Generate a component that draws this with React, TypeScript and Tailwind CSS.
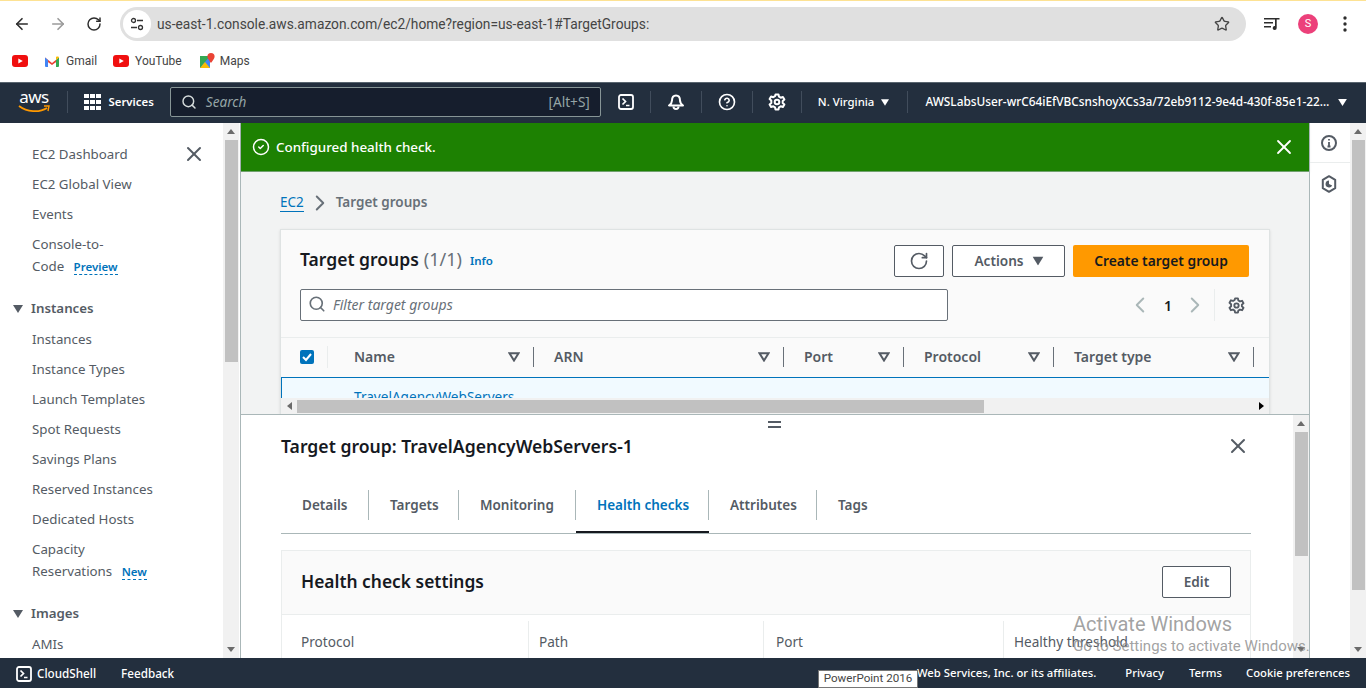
import React from 'react';
import {
  ArrowLeft,
  ArrowRight,
  RotateCw,
  Star,
  X,
  Search,
  ChevronRight,
  ChevronLeft,
  CircleCheck,
  CircleHelp,
} from 'lucide-react';

const ember = { fontFamily: '"Noto Sans", "Open Sans", sans-serif' };

const Caret = ({ className = '' }: { className?: string }) => (
  <svg width="10" height="8" viewBox="0 0 10 8" className={className}>
    <path d="M0 0h10L5 8z" fill="currentColor" />
  </svg>
);

const FilterCaret = () => (
  <svg width="12" height="10" viewBox="0 0 12 10" className="text-[#545b64]">
    <path d="M1.500 1.200h9L6 8.500z" fill="none" stroke="currentColor" strokeWidth="2" />
  </svg>
);

const Gear = ({ size = 18, className = '' }: { size?: number; className?: string }) => (
  <svg width={size} height={size} viewBox="0 0 18 18" fill="none" stroke="currentColor" strokeWidth="2" className={className}>
    <path d="M7.500 1.500h3l.5 2.200 1.700 1 2.200-.7 1.500 2.600-1.700 1.500v1.800l1.700 1.500-1.500 2.600-2.200-.7-1.700 1-.5 2.200h-3l-.5-2.200-1.700-1-2.200.7-1.500-2.600 1.700-1.500V7.600L1.600 6.100l1.500-2.600 2.200.7 1.700-1z" strokeLinejoin="round" />
    <circle cx="9" cy="9" r="2.300" />
  </svg>
);

const Terminal = ({ size = 16 }: { size?: number }) => (
  <svg width={size} height={size} viewBox="0 0 16 16" fill="none" stroke="currentColor">
    <rect x="1" y="1" width="14" height="14" rx="2" strokeWidth="1.800" />
    <path d="M4.500 4.500 7.500 7.500l-3 3M8 11.500h3.500" strokeWidth="1.700" />
  </svg>
);

const YouTubeIcon = () => (
  <svg width="16" height="12" viewBox="0 0 16 12">
    <rect width="16" height="12" rx="3" fill="#f00f0f" />
    <path d="M6.300 3.400v5.200L10.800 6z" fill="#fff" />
  </svg>
);

const ScrollArrow = ({ up }: { up?: boolean }) => (
  <svg width="8" height="5" viewBox="0 0 8 5" className="text-[#6b6b6b]">
    <path d={up ? 'M4 0l4 5H0z' : 'M0 0h8L4 5z'} fill="currentColor" />
  </svg>
);

const VScroll = ({ thumb }: { thumb: number }) => (
  <div className="w-4 shrink-0 bg-[#f1f1f1] flex flex-col items-center relative">
    <div className="h-[17px] flex items-center justify-center"><ScrollArrow up /></div>
    <div className="w-[13px] bg-[#c1c1c1]" style={{ height: thumb }} />
    <div className="absolute bottom-0 h-[17px] flex items-center justify-center"><ScrollArrow /></div>
  </div>
);

const NavSep = ({ className = '' }: { className?: string }) => <div className={`w-px h-[22px] bg-[#414d5c] shrink-0 ${className}`} />;

const SideItem = ({ children }: { children: React.ReactNode }) => (
  <div className="h-[30px] leading-[30px] pl-8 text-[13.300px] text-[#545b64] whitespace-nowrap">{children}</div>
);

const SideHead = ({ children }: { children: React.ReactNode }) => (
  <div className="h-[33px] pt-[2px] flex items-center pl-[13px] gap-[8px] text-[13.300px] font-semibold text-[#545b64]">
    <Caret className="text-[#545b64]" />
    {children}
  </div>
);

const Badge = ({ children }: { children: React.ReactNode }) => (
  <span className="ml-[6px] text-[11.500px] font-semibold text-[#0073bb] border-b border-dashed border-[#0073bb] leading-[15px] inline-block">{children}</span>
);

const columns = [
  { name: 'Name', w: 'w-[200px]' },
  { name: 'ARN', w: 'w-[250px]' },
  { name: 'Port', w: 'w-[120px]' },
  { name: 'Protocol', w: 'w-[150px]' },
  { name: 'Target type', w: 'w-[200px]' },
];

const tabs = [
  { name: 'Details', w: 'w-[88px]' },
  { name: 'Targets', w: 'w-[90px]' },
  { name: 'Monitoring', w: 'w-[117px]' },
  { name: 'Health checks', w: 'w-[133px]', active: true },
  { name: 'Attributes', w: 'w-[108px]' },
  { name: 'Tags', w: 'w-[90px]' },
];

const settings = [
  { name: 'Protocol', w: 'w-[247px] pl-[19px]' },
  { name: 'Path', w: 'w-[235px] pl-[10px]' },
  { name: 'Port', w: 'w-[240px] pl-3' },
  { name: 'Healthy threshold', w: 'flex-1 pl-[10px]' },
];

export default function App() {
  return (
    <div className="w-[1366px] h-[688px] overflow-hidden bg-white flex flex-col relative" style={ember}>
      {/* browser chrome */}
      <div className="h-[82px] shrink-0 bg-white border-t border-[#fde293] flex flex-col" style={{ fontFamily: 'Roboto, sans-serif' }}>
        <div className="h-[34px] mt-[6px] flex items-center">
          <ArrowLeft size={18} className="ml-[13px] text-[#2d2d2d]" strokeWidth={2.2} />
          <ArrowRight size={18} className="ml-[18px] text-[#9a9a9a]" strokeWidth={2.2} />
          <RotateCw size={16} className="ml-[19px] text-[#2d2d2d]" strokeWidth={2.2} />
          <div className="ml-[18px] w-[1126px] h-[34px] rounded-full bg-[#e0e0e0] flex items-center pl-[3px]">
            <div className="w-[28px] h-[28px] rounded-full bg-white flex items-center justify-center">
              <svg width="14" height="14" viewBox="0 0 14 14" fill="none" stroke="#333" strokeWidth="1.300">
                <circle cx="3.500" cy="3.500" r="2" />
                <path d="M7 3.500h6M1 10.500h6" />
                <circle cx="10.500" cy="10.500" r="2" />
              </svg>
            </div>
            <span className="ml-[6px] text-[13.750px] text-[#454545]">us-east-1.console.aws.amazon.com/ec2/home?region=us-east-1#TargetGroups:</span>
            <Star size={16} className="ml-auto mr-4 text-[#454545]" />
          </div>
          <svg width="16" height="14" viewBox="0 0 16 14" className="ml-[18px] text-[#2d2d2d]" fill="currentColor">
            <path d="M0 1h12v1.600H0zM0 5h9v1.600H0zM0 9h7v1.600H0zM11 1h4.500v1.600H12.700V11a2 2 0 1 1-1.700-2z" />
          </svg>
          <div className="ml-[18px] w-5 h-5 rounded-full bg-[#ec407a] text-white text-[11px] flex items-center justify-center">S</div>
          <svg width="4" height="16" viewBox="0 0 4 16" className="ml-[25px] text-[#2d2d2d]" fill="currentColor">
            <circle cx="2" cy="2" r="1.700" />
            <circle cx="2" cy="8" r="1.700" />
            <circle cx="2" cy="14" r="1.700" />
          </svg>
        </div>
        <div className="h-[32px] mt-[4px] flex items-center text-[12px] text-[#454545]">
          <div className="ml-3"><YouTubeIcon /></div>
          <svg width="14" height="11" viewBox="0 0 14 11" className="ml-[17px]">
            <path d="M0 1.500 7 7l7-5.500V4L7 9 0 4z" fill="#ea4335" />
            <path d="M0 1.500 3 4v7H1a1 1 0 0 1-1-1z" fill="#4285f4" />
            <path d="M14 1.500 11 4v7h2a1 1 0 0 0 1-1z" fill="#34a853" />
            <path d="M11 1v3l3-2.500C14 .6 12.200.1 11 1z" fill="#fbbc04" />
          </svg>
          <span className="ml-[7px]">Gmail</span>
          <div className="ml-4"><YouTubeIcon /></div>
          <span className="ml-[6px]">YouTube</span>
          <svg width="16" height="16" viewBox="0 0 16 16" className="ml-[17px]">
            <path d="M1 3h10v12H1z" fill="#34a853" />
            <path d="M1 15 11 3v12z" fill="#4285f4" />
            <path d="M1 15l5-6 5 6z" fill="#fbbc04" />
            <path d="M12 0a3.600 3.600 0 0 0-3.600 3.600C8.400 6 12 10 12 10s3.600-4 3.600-6.400A3.600 3.600 0 0 0 12 0z" fill="#ea4335" />
          </svg>
          <span className="ml-[5px]">Maps</span>
        </div>
      </div>

      {/* aws top nav */}
      <div className="h-[41px] shrink-0 bg-[#232f3e] border-t border-[#aab7b8]/40 pb-[2px] flex items-center text-white text-[11.400px]">
        <div className="ml-[18px] w-[32px] h-[26px] flex flex-col items-center">
          <span className="text-[17px] leading-[16px] font-normal tracking-[-0.5px]">aws</span>
          <svg width="32" height="8" viewBox="0 0 32 8" fill="none">
            <path d="M1 1c8 6 20 7 28 2" stroke="#ff9900" strokeWidth="1.800" />
            <path d="M26 1l5 0-1 5" stroke="#ff9900" strokeWidth="1.400" />
          </svg>
        </div>
        <NavSep className="ml-[17px]" />
        <div className="ml-4 grid grid-cols-3 gap-[1.500px]">
          {Array.from({ length: 9 }).map((_, i) => (
            <div key={i} className="w-[4.500px] h-[4.500px] bg-white" />
          ))}
        </div>
        <span className="ml-2 font-semibold">Services</span>
        <div className="ml-4 w-[431px] h-[30px] bg-[#161e2d] border border-[#879596] rounded-[2px] flex items-center px-[10px] text-[#95a5a6]">
          <Search size={16} className="text-[#d5dbdb]" strokeWidth={2.200} />
          <span className="ml-[9px] italic text-[13.600px]">Search</span>
          <span className="ml-auto text-[13.600px]">[Alt+S]</span>
        </div>
        <div className="ml-[17px]"><Terminal /></div>
        <NavSep className="ml-4" />
        <svg width="18" height="18" viewBox="0 0 18 18" className="ml-4" fill="none" stroke="currentColor" strokeWidth="2" strokeLinejoin="round">
          <path d="M9 2.500c-3 0-4 2.500-4 5 0 2-1 3.500-3 5h14c-2-1.500-3-3-3-5 0-2.500-1-5-4-5z" />
          <path d="M6.500 13.500a2.500 2.500 0 0 0 5 0" />
        </svg>
        <NavSep className="ml-4" />
        <CircleHelp size={18} className="ml-4" strokeWidth={2.200} />
        <NavSep className="ml-4" />
        <Gear size={18} className="ml-[15px]" />
        <NavSep className="ml-[15px]" />
        <span className="ml-4 font-medium">N. Virginia</span>
        <Caret className="ml-[7px] w-2 h-[7px]" />
        <NavSep className="ml-[18px]" />
        <span className="ml-[17px] w-[408px] text-[11.850px] font-medium whitespace-nowrap overflow-hidden text-ellipsis">AWSLabsUser-wrC64iEfVBCsnshoyXCs3a/72eb9112-9e4d-430f-85e1-22e1f3a7c4d8</span>
        <Caret className="ml-[5px] w-[9px] h-[7px]" />
      </div>

      {/* main */}
      <div className="flex-1 min-h-0 flex">
        {/* side nav */}
        <div className="w-[223px] shrink-0 pt-4 relative overflow-hidden">
          <X size={24} className="absolute left-[182px] top-[19px] text-[#545b64]" strokeWidth={2} />
          <SideItem>EC2 Dashboard</SideItem>
          <SideItem>EC2 Global View</SideItem>
          <SideItem>Events</SideItem>
          <div className="h-[22px] leading-[22px] pl-8 mt-[4px] text-[13.300px] text-[#545b64]">Console-to-</div>
          <div className="h-[22px] leading-[22px] pl-8 text-[13.300px] text-[#545b64]">Code <Badge>Preview</Badge></div>
          <div className="h-[14px]" />
          <SideHead>Instances</SideHead>
          <SideItem>Instances</SideItem>
          <SideItem>Instance Types</SideItem>
          <SideItem>Launch Templates</SideItem>
          <SideItem>Spot Requests</SideItem>
          <SideItem>Savings Plans</SideItem>
          <SideItem>Reserved Instances</SideItem>
          <SideItem>Dedicated Hosts</SideItem>
          <div className="h-[22px] leading-[22px] pl-8 mt-[4px] text-[13.300px] text-[#545b64]">Capacity</div>
          <div className="h-[22px] leading-[22px] pl-8 text-[13.300px] text-[#545b64]">Reservations <Badge>New</Badge></div>
          <div className="h-[14px]" />
          <SideHead>Images</SideHead>
          <SideItem>AMIs</SideItem>
        </div>
        <VScroll thumb={222} />
        <div className="w-px bg-[#aab7b8] shrink-0 ml-px" />

        {/* content */}
        <div className="w-[1068px] shrink-0 flex flex-col min-w-0">
          <div className="h-[49px] shrink-0 bg-[#1d8102] border-b border-[#aab7b8]/60 shadow-sm flex items-center pl-[11px] pr-[13px] text-white">
            <CircleCheck size={18} strokeWidth={2} />
            <span className="ml-[6px] text-[13.400px] font-medium">Configured health check.</span>
            <X size={24} className="ml-auto" strokeWidth={1.800} />
          </div>

          {/* upper panel */}
          <div className="h-[243px] shrink-0 bg-[#f2f3f3] border-b border-[#aab7b8] pl-[39px] overflow-hidden flex flex-col">
            <div className="h-[57px] shrink-0 flex items-center text-[13.500px] pt-[4px]">
              <span className="text-[#0073bb] border-b border-[#0073bb] leading-[18px]">EC2</span>
              <ChevronRight size={26} className="ml-[3px] text-[#687078]" strokeWidth={1.800} />
              <span className="ml-[3px] text-[#687078] font-semibold">Target groups</span>
            </div>
            <div className="flex-1 w-[990px] min-h-0 bg-[#fafafa] border-l border-r border-t border-[#dfe3e3] flex flex-col relative shadow-sm">
              <div className="h-[108px] shrink-0 pl-[19px] pr-5 pt-[15px] border-b border-[#eaeded]">
                <div className="flex items-center h-8">
                  <span className="text-[17.500px] font-semibold text-[#16191f] -mt-[3px]">Target groups</span>
                  <span className="ml-[5px] text-[18px] text-[#687078] -mt-[3px]">(1/1)</span>
                  <span className="ml-2 text-[11.500px] font-semibold text-[#0073bb]">Info</span>
                  <div className="ml-auto w-[50px] h-8 bg-white border border-[#545b64] rounded-[2px] flex items-center justify-center">
                    <RotateCw size={20} className="text-[#545b64]" strokeWidth={2} />
                  </div>
                  <div className="ml-2 w-[113px] h-8 bg-white border border-[#545b64] rounded-[2px] flex items-center justify-center gap-[9px] text-[13.600px] font-semibold text-[#545b64]">
                    Actions <Caret className="scale-110" />
                  </div>
                  <div className="ml-2 w-[176px] h-8 bg-[#ff9900] rounded-[2px] flex items-center justify-center text-[13.800px] font-semibold text-[#16191f]">Create target group</div>
                </div>
                <div className="flex items-center mt-3 h-[32px]">
                  <div className="w-[648px] h-full bg-white border border-[#687078] rounded-[2px] flex items-center pl-[7px] pb-[2px] text-[14px] italic text-[#687078]">
                    <Search size={18} className="text-[#687078]" strokeWidth={2.200} />
                    <span className="ml-[7px]">Filter target groups</span>
                  </div>
                  <ChevronLeft size={26} className="ml-[179px] text-[#aab7b8]" strokeWidth={1.800} />
                  <span className="ml-[11px] text-[14px] font-semibold text-[#16191f]">1</span>
                  <ChevronRight size={26} className="ml-[10px] text-[#aab7b8]" strokeWidth={1.800} />
                  <div className="ml-[6px] w-px h-[32px] bg-[#eaeded]" />
                  <Gear size={17} className="ml-[13px] text-[#545b64]" />
                </div>
              </div>
              <div className="h-[39px] shrink-0 pb-[2px] flex items-center text-[14px] font-semibold text-[#545b64]">
                <div className="w-[47px] h-[22px] flex items-center pl-[19px] border-r border-[#eaeded] shrink-0">
                  <div className="w-[14px] h-[14px] rounded-[2px] bg-[#0073bb] flex items-center justify-center">
                    <svg width="10" height="10" viewBox="0 0 10 10" fill="none" stroke="#fff" strokeWidth="2"><path d="M1 5l3 3 5-6" /></svg>
                  </div>
                </div>
                <div className="w-[6px] shrink-0" />
                {columns.map((c) => (
                  <div key={c.name} className={`${c.w} shrink-0 h-[20px] flex items-center justify-between pl-[20px] pr-[13px] border-r border-[#687078]`}>
                    <span>{c.name}</span>
                    <FilterCaret />
                  </div>
                ))}
              </div>
              <div className="flex-1 min-h-0 bg-[#f1faff] border-t border-l border-[#0073bb] pl-[72px] text-[13.600px] text-[#0073bb] leading-[38px]">TravelAgencyWebServers</div>
              <div className="absolute left-0 right-0 bottom-0 h-[16px] bg-[#f1f1f1] flex items-center">
                <div className="w-4 flex justify-center"><div className="border-y-4 border-y-transparent border-r-[5px] border-r-[#6b6b6b]" /></div>
                <div className="w-[687px] h-[13px] bg-[#c1c1c1]" />
                <div className="ml-auto w-[16px] flex justify-center"><div className="border-y-4 border-y-transparent border-l-[5px] border-l-black" /></div>
              </div>
            </div>
          </div>

          {/* split panel */}
          <div className="flex-1 min-h-0 flex relative">
            <div className="flex-1 min-w-0 bg-white pl-10 pr-[41px] overflow-hidden relative">
              <div className="absolute left-[527px] top-[6px] w-[13px] h-[7px] border-y-2 border-[#545b64]" />
              <div className="h-[62px] flex items-center justify-between pr-[2px]">
                <span className="text-[17.600px] font-semibold text-[#16191f]">Target group: TravelAgencyWebServers-1</span>
                <X size={24} className="text-[#545b64]" strokeWidth={2} />
              </div>
              <div className="mt-[13px] h-[44px] flex items-start border-b border-[#aab7b8] w-[970px]">
                {tabs.map((t) => (
                  <div key={t.name} className={`${t.w} shrink-0 h-[43px] relative`}>
                    <div className={`h-[30px] flex items-center pl-[21px] text-[13.500px] font-semibold ${t.active ? 'text-[#0073bb]' : 'text-[#545b64]'} ${t.name !== 'Tags' ? 'border-r border-[#aab7b8]' : ''}`}>{t.name}</div>
                    {t.active && <div className="absolute left-0 right-0 bottom-0 h-[2px] bg-[#16191f]" />}
                  </div>
                ))}
              </div>
              <div className="mt-4 w-[970px] border-l border-r border-t border-[#eaeded]">
                <div className="h-[64px] bg-[#fafafa] border-b border-[#eaeded] flex items-center justify-between pl-[19px] pr-[19px]">
                  <span className="text-[17.400px] font-semibold text-[#16191f] -mt-[3px]">Health check settings</span>
                  <div className="w-[69px] h-8 bg-white border border-[#545b64] rounded-[2px] flex items-center justify-center text-[13.600px] font-semibold text-[#545b64] -mt-[1px]">Edit</div>
                </div>
                <div className="flex pt-[6px] h-[60px]">
                  {settings.map((s, i) => (
                    <div key={s.name} className={`${s.w} shrink-0 pt-[11px] text-[13.600px] leading-[20px] text-[#545b64] ${i < 3 ? 'border-r border-[#eaeded]' : ''}`}>{s.name}</div>
                  ))}
                </div>
              </div>
            </div>
            <VScroll thumb={124} />
          </div>
        </div>

        {/* right rail */}
        <div className="w-[41px] shrink-0 border-l border-[#aab7b8] flex flex-col items-center text-[#545b64]">
          <div className="h-[40px] w-full pr-[2px] flex items-center justify-center border-b border-[#eaeded]">
            <svg width="16" height="16" viewBox="0 0 16 16" fill="none" stroke="currentColor" strokeWidth="2">
              <circle cx="8" cy="8" r="7" />
              <path d="M8 7v4.500M6.500 11.500h3M8 4v1.500" strokeWidth="1.800" />
            </svg>
          </div>
          <svg width="16" height="18" viewBox="0 0 16 18" fill="none" stroke="currentColor" strokeWidth="2" className="mt-[12px] mr-[2px]">
            <path d="M8 1.200l6.200 3.600v8.400L8 16.800l-6.200-3.600V4.800z" strokeLinejoin="round" />
            <path d="M8 5.500a3.500 3.500 0 1 0 3.200 5L8 9z" fill="currentColor" stroke="none" />
          </svg>
        </div>
        <VScroll thumb={450} />
      </div>

      {/* footer */}
      <div className="h-[30px] shrink-0 pt-px bg-[#232f3e] flex items-center text-white text-[11.300px] font-medium relative">
        <div className="ml-4"><Terminal /></div>
        <span className="ml-[5px] text-[11.700px]">CloudShell</span>
        <span className="ml-[25px] text-[11.700px]">Feedback</span>
        <span className="ml-auto whitespace-nowrap">Web Services, Inc. or its affiliates.</span>
        <span className="ml-[29px]">Privacy</span>
        <span className="ml-[25px]">Terms</span>
        <span className="ml-[24px] mr-4">Cookie preferences</span>
      </div>

      {/* overlays: tooltip and windows watermark */}
      <div className="absolute left-[818px] top-[670px] w-[100px] h-[18px] bg-white border border-[#767676] text-[11.600px] text-[#454545] flex items-center justify-center" style={{ fontFamily: 'Roboto, sans-serif' }}>PowerPoint 2016</div>
      <div className="absolute left-[1073px] top-[612px] text-[#8a8a8a]/80 pointer-events-none whitespace-nowrap" style={{ fontFamily: 'Roboto, sans-serif' }}>
        <div className="text-[20px] leading-[24px]">Activate Windows</div>
        <div className="text-[15px] leading-[20px]">Go to Settings to activate Windows.</div>
      </div>
    </div>
  );
}
